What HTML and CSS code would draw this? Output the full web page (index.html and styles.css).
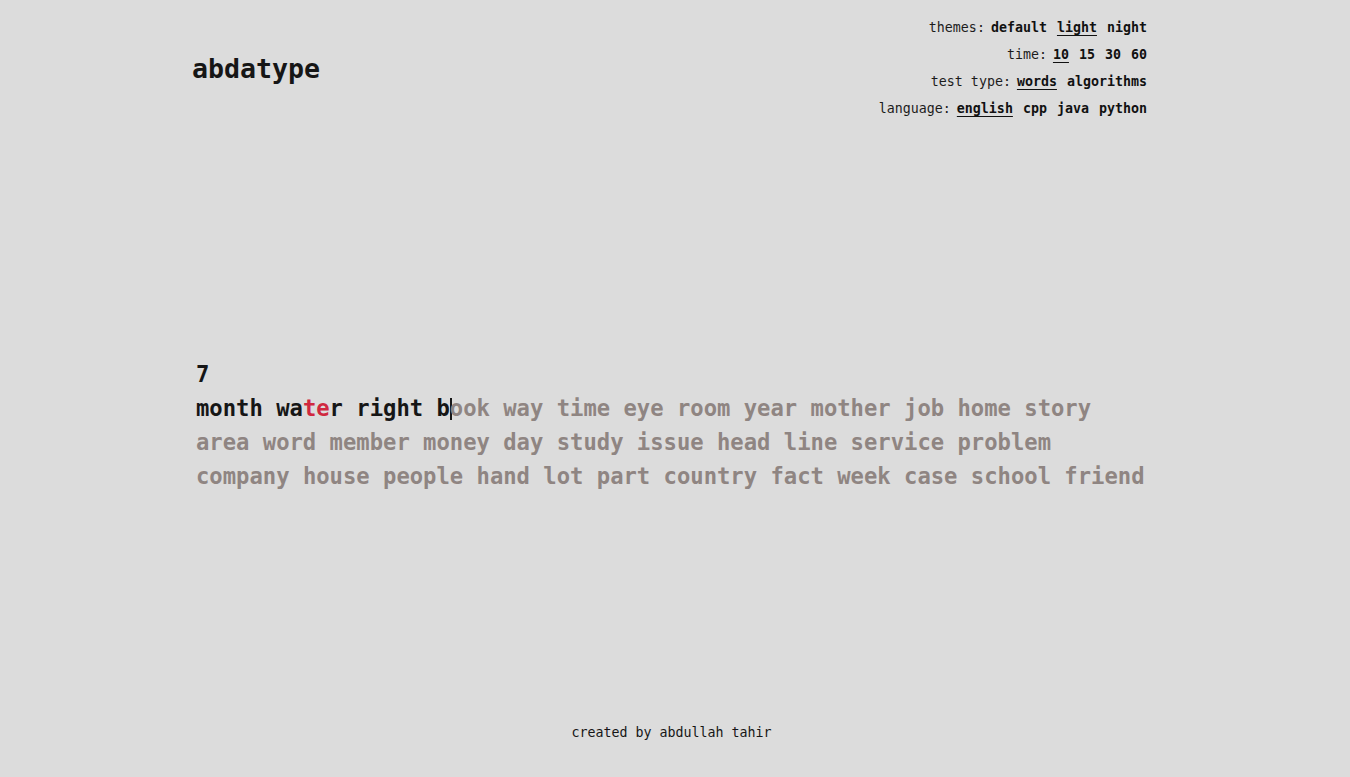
FILE: index.html
```html
<!DOCTYPE html>
<html lang="en">
<head>
<meta charset="utf-8">
<title>abdatype</title>
<link rel="stylesheet" href="styles.css">
</head>
<body>
<div class="page">
  <header class="header">
    <h1 class="logo">abdatype</h1>
    <nav class="menu">
      <div class="menu-row"><span class="label">themes:</span><span class="opt">default</span><span class="opt sel">light</span><span class="opt">night</span></div>
      <div class="menu-row"><span class="label">time:</span><span class="opt sel">10</span><span class="opt">15</span><span class="opt">30</span><span class="opt">60</span></div>
      <div class="menu-row"><span class="label">test type:</span><span class="opt sel">words</span><span class="opt">algorithms</span></div>
      <div class="menu-row"><span class="label">language:</span><span class="opt sel">english</span><span class="opt">cpp</span><span class="opt">java</span><span class="opt">python</span></div>
    </nav>
  </header>
  <main class="test">
    <div class="timer">7</div>
    <div class="words"><span class="word ok">month</span> <span class="word ok">wa<span class="bad">te</span>r</span> <span class="word ok">right</span> <span class="word">b<span class="caret"></span><span class="todo">ook</span></span> <span class="word todo">way</span> <span class="word todo">time</span> <span class="word todo">eye</span> <span class="word todo">room</span> <span class="word todo">year</span> <span class="word todo">mother</span> <span class="word todo">job</span> <span class="word todo">home</span> <span class="word todo">story</span> <span class="word todo">area</span> <span class="word todo">word</span> <span class="word todo">member</span> <span class="word todo">money</span> <span class="word todo">day</span> <span class="word todo">study</span> <span class="word todo">issue</span> <span class="word todo">head</span> <span class="word todo">line</span> <span class="word todo">service</span> <span class="word todo">problem</span> <span class="word todo">company</span> <span class="word todo">house</span> <span class="word todo">people</span> <span class="word todo">hand</span> <span class="word todo">lot</span> <span class="word todo">part</span> <span class="word todo">country</span> <span class="word todo">fact</span> <span class="word todo">week</span> <span class="word todo">case</span> <span class="word todo">school</span> <span class="word todo">friend</span></div>
  </main>
  <footer class="footer">created by abdullah tahir</footer>
</div>
</body>
</html>
```
FILE: styles.css
```css
html, body {
  margin: 0;
  padding: 0;
  background: #dcdcdc;
}
body {
  font-family: "DejaVu Sans Mono", "Liberation Mono", monospace;
  color: #161616;
}
.page {
  min-height: 100vh;
  display: flex;
  flex-direction: column;
  padding: 0 203px 0 196px;
  box-sizing: border-box;
}
.header {
  display: flex;
  justify-content: space-between;
  align-items: center;
  padding-top: 14px;
  padding-bottom: 14px;
}
.logo {
  margin: 0 0 0 -4px;
  font-size: 26.6px;
  font-weight: bold;
  color: #161616;
}
.menu {
  display: flex;
  flex-direction: column;
  align-items: flex-end;
  font-size: 13.3px;
}
.menu-row {
  line-height: 27px;
  display: flex;
  gap: 10px;
}
.label {
  margin-right: -4px;
  color: #1c1c1c;
}
.opt {
  font-weight: bold;
  color: #111;
}
.opt.sel {
  text-decoration: underline;
  text-decoration-thickness: 1px;
  text-underline-offset: 3px;
}
.test {
  flex: 1;
  display: flex;
  flex-direction: column;
  justify-content: center;
  padding-bottom: 8px;
  font-size: 22.2px;
  font-weight: bold;
  line-height: 34px;
}
.timer {
  color: #161616;
}
.word {
  display: inline-block;
  color: #161616;
}
.ok { color: #161616; }
.bad { color: #d0283f; }
.todo { color: #8f8582; }
.caret {
  display: inline-block;
  width: 0;
  height: 22px;
  border-left: 2px solid #161616;
  margin-right: -2px;
  vertical-align: -4px;
}
.footer {
  text-align: center;
  font-size: 13.3px;
  line-height: 20px;
  padding-top: 1px;
  padding-bottom: 34px;
  color: #161616;
}
```
